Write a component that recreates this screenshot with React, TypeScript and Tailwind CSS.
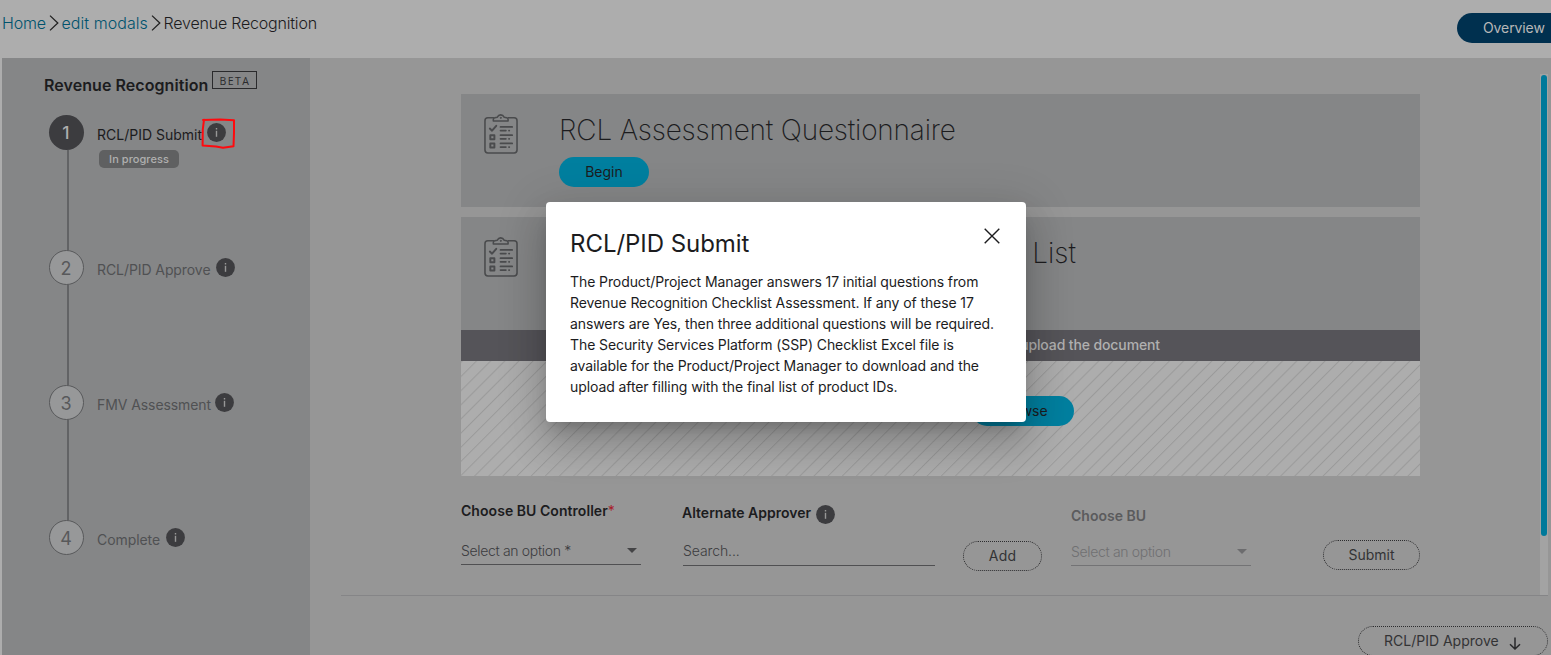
import React from "react";

function InfoIcon() {
  return (
    <svg className="block h-[19px] w-[19px] shrink-0" viewBox="0 0 19 19">
      <circle cx="9.5" cy="9.5" r="9.4" fill="#3c3c3f" />
      <rect x="8.8" y="7.8" width="1.4" height="6" fill="#979797" />
      <rect x="8.8" y="5" width="1.4" height="1.5" fill="#979797" />
    </svg>
  );
}

function ClipboardIcon() {
  return (
    <svg className="block h-10 w-[34px] shrink-0" viewBox="0 0 35 41" fill="none" stroke="#4a4b4d" strokeWidth="1.6" strokeLinecap="round" strokeLinejoin="round">
      <path d="M9.8 3.8H4A3 3 0 0 0 1 6.8V37a3 3 0 0 0 3 3h27a3 3 0 0 0 3-3V6.8a3 3 0 0 0-3-3h-6" />
      <path d="M9.6 7.2V5.6q0-1.6 1.6-1.9l2.3-.4c.8-1.5 2-2.5 3.7-2.5s2.9 1 3.7 2.5l2.3.4q1.6.3 1.6 1.9v1.6z" />
      <circle cx="17.2" cy="3.9" r=".5" strokeWidth="1" />
      <path d="M6 14.9l2.3 2.2 4.3-5" strokeWidth="2" />
      <rect x="6.5" y="21.7" width="4.2" height="4.2" strokeWidth="2" />
      <rect x="6.5" y="30.2" width="4.2" height="4.2" strokeWidth="2" />
      <path d="M17 13.2h12M17 21.7h12M17 30.2h12" strokeWidth="1.8" />
      <path d="M17 17h5.5M25.7 17h.3M17 25.5h5.5M25.7 25.5h.3M17 34h5.5M25.7 34h.3" strokeWidth="1.8" />
    </svg>
  );
}

function Chevron() {
  return (
    <svg className="mx-[3px] block h-4 w-[10px]" viewBox="0 0 10 16" fill="none" stroke="#222" strokeWidth="1.3">
      <path d="M1 .6l7.8 7.4L1 15.4" />
    </svg>
  );
}

function Caret({ color }: { color: string }) {
  return (
    <svg className="block h-[5px] w-[10px]" viewBox="0 0 10 5">
      <path d="M0 0h10L5 5z" fill={color} />
    </svg>
  );
}

function Step({ n, label, width, active, last }: { n: number; label: string; width: string; active?: boolean; last?: boolean }) {
  return (
    <div className="flex h-[135px]">
      <div className="flex w-[35px] flex-col items-center">
        <div
          className={
            active
              ? "flex h-[35px] w-[35px] shrink-0 items-center justify-center rounded-full bg-[#3c3c3f] pt-[2px] pr-[1px] text-[17.5px] font-medium text-[#adadad]"
              : "flex h-[35px] w-[35px] shrink-0 items-center justify-center rounded-full border border-[#58595b] bg-[#979899] pt-[2px] pr-[1px] text-[18px] text-[#58595b]"
          }
        >
          {n}
        </div>
        {!last && <div className="ml-[3px] w-[2px] grow bg-[#626365]" />}
      </div>
      <div className="ml-[13px] pt-2">
        <div className="flex h-[19px] items-center gap-[5px]">
          <div className={width + (active ? " text-[#1c1c1e]" : " tracking-[-0.08px] text-[#505153]") + " pt-[5px] text-[14px] leading-5 whitespace-nowrap"}>{label}</div>
          <InfoIcon />
        </div>
        {active && (
          <div className="mt-2 ml-[2px] flex h-[18px] w-20 items-center justify-center rounded-[5px] bg-[#5f6061] pt-[1px] text-[11px] font-medium tracking-[0.05px] text-[#b0b0b0]">In progress</div>
        )}
      </div>
    </div>
  );
}

function Card({ children }: { children: React.ReactNode }) {
  return (
    <div className="flex h-[113px] shrink-0 bg-[#858687] pt-5 pl-[23px]">
      <ClipboardIcon />
      {children}
    </div>
  );
}

export default function App() {
  return (
    <div className="relative flex h-[655px] w-[1551px] flex-col overflow-hidden bg-[#adadad] font-['Inter',sans-serif] text-[#1c1c1e]">
      <header className="flex h-[58px] shrink-0 justify-between">
        <nav className="mt-[13px] ml-[2px] flex h-5 items-center text-[16px] font-light whitespace-nowrap">
          <span className="w-[43.5px] tracking-[-0.2px] text-[#00536d]">Home</span>
          <Chevron />
          <span className="w-[86px] tracking-[0.05px] text-[#00536d]">edit modals</span>
          <Chevron />
          <span className="tracking-[-0.2px]">Revenue Recognition</span>
        </nav>
        <div className="mt-[13px] flex h-[30px] w-[94px] items-center rounded-l-full bg-[#00304f] pb-[2px] pl-[26px] text-[14px] tracking-[-0.1px] text-[#b8b8b8]">Overview</div>
      </header>
      <div className="flex grow">
        <aside className="ml-[2px] w-[308px] shrink-0 bg-[#858687]">
          <div className="flex h-[57px] pt-[13px] pl-[42px]">
            <h2 className="mt-1 h-5 w-[168px] text-[16px] leading-5 font-semibold tracking-[0.06px] whitespace-nowrap">Revenue Recognition</h2>
            <div className="flex h-[18px] w-[45px] items-center justify-center border border-[#2a2a2c] pt-[4px] pl-[1px] font-['Open_Sans',sans-serif] text-[10.5px] tracking-[1.5px] text-[#2a2a2c]">BETA</div>
          </div>
          <div className="pl-[47px]">
            <Step n={1} label="RCL/PID Submit" width="w-[105px]" active />
            <Step n={2} label="RCL/PID Approve" width="w-[114px]" />
            <Step n={3} label="FMV Assessment" width="w-[113px]" />
            <Step n={4} label="Complete" width="w-[63.5px]" last />
          </div>
        </aside>
        <main className="flex w-[1241px] flex-col bg-[#969696]">
          <div className="flex h-[537px] shrink-0 justify-between">
            <div className="ml-[151px] flex w-[959px] flex-col pt-9">
              <Card>
                <div className="ml-[41px]">
                  <h1 className="mt-[-4px] h-10 text-[28px] leading-10 font-extralight tracking-[-0.2px] whitespace-nowrap">RCL Assessment Questionnaire</h1>
                  <div className="mt-[7px] flex h-[30px] w-[90px] items-center justify-center rounded-full bg-[#007f9f] pb-[2px] text-[14px]">Begin</div>
                </div>
              </Card>
              <div className="h-[10px] shrink-0" />
              <Card>
                <h1 className="mt-[-4px] ml-[41px] h-10 w-[517px] text-right text-[28px] leading-10 font-extralight whitespace-nowrap">List</h1>
              </Card>
              <div className="flex h-[31px] shrink-0 items-center justify-end bg-[#555459] pr-[260px] pb-[2px] text-[14px] font-medium tracking-[-0.12px] text-[#b0b0b0]">upload the document</div>
              <div className="flex h-[115px] shrink-0 justify-end bg-[repeating-linear-gradient(135deg,#adadad_0px,#9a9a9a_0.9px,#a6a6a6_1.5px,#adadad_2.2px,#adadad_10px)] pt-[35px] pr-[346px]">
                <div className="flex h-[30px] w-[102px] items-center justify-center rounded-full bg-[#007f9f] pb-[2px] text-[14px]">Browse</div>
              </div>
              <div className="flex pt-[24px] text-[14px]">
                <div className="w-[180px]">
                  <div className="flex h-5 items-center font-semibold tracking-[0.05px] whitespace-nowrap">Choose BU Controller<span className="font-normal text-[#a81c2b]">*</span></div>
                  <div className="mt-5 flex h-[25px] items-center justify-between border-b border-[#505052] pr-1 pb-[3px] font-light text-[#3c3c3f]">
                    <span className="tracking-[-0.33px]">Select an option *</span>
                    <Caret color="#444446" />
                  </div>
                </div>
                <div className="ml-[41px] w-[253px] pt-[2px]">
                  <div className="flex h-5 items-center gap-[5px] font-semibold whitespace-nowrap">
                    <span className="w-[129px]">Alternate Approver</span>
                    <div className="pt-[4px]"><InfoIcon /></div>
                  </div>
                  <div className="mt-[18px] ml-[1px] flex h-[26px] items-center border-b border-[#505052] pb-[4px] font-light tracking-[-0.1px] text-[#3c3c3f]">Search...</div>
                </div>
                <div className="mt-[41px] ml-[28px] flex h-[30px] w-[79px] items-center justify-center rounded-full border border-dotted border-[#2c2c2e] pb-[2px] text-[14px] tracking-[0.2px] text-[#333335]">Add</div>
                <div className="ml-[29px] w-[180px] pt-[5px]">
                  <div className="flex h-5 items-center font-semibold text-[#5b5b5d]">Choose BU</div>
                  <div className="mt-4 flex h-[25px] items-center justify-between border-b border-[#737375] pr-1 pb-[3px] font-light text-[#707072]">
                    <span className="tracking-[-0.33px]">Select an option</span>
                    <Caret color="#6c6c6e" />
                  </div>
                </div>
                <div className="mt-[40px] ml-[72px] flex h-[30px] w-[97px] items-center justify-center rounded-full border border-dotted border-[#2c2c2e] pb-[2px] text-[14px] text-[#333335]">Submit</div>
              </div>
            </div>
            <div className="mt-[16px] mr-[3px] w-2 bg-[#a3a3a3] px-[1px] pt-[1px]">
              <div className="h-[461px] rounded-full bg-[#00799a]" />
            </div>
          </div>
          <div className="mr-[3px] ml-[31px] h-px bg-[#858587]" />
          <div className="mt-[30px] mr-[3px] flex h-[30px] w-[190px] shrink-0 items-center gap-[10px] self-end rounded-full border border-dotted border-[#2c2c2e] pl-[25px] text-[14px] whitespace-nowrap text-[#333335]">
            <span className="w-[115px] pb-[2px]">RCL/PID Approve</span>
            <svg className="mt-1 block h-[13px] w-3" viewBox="0 0 12 13" fill="none" stroke="#29292b" strokeWidth="1.5">
              <path d="M6 .5v11.5M1 7.2l5 4.8 5-4.8" />
            </svg>
          </div>
        </main>
      </div>
      <svg className="absolute top-[117px] left-[200px] h-[34px] w-[37px]" viewBox="0 0 37 34" fill="none" stroke="#ff0a0e" strokeWidth="2" strokeLinejoin="round" strokeLinecap="round">
        <path d="M4 2.7L2.8 12.5 2.6 28.5 16 29.5 23 30.7 33.5 29.3 34 16 34 3.2 20 2.5 3 2.9" />
      </svg>
      <section role="dialog" className="absolute top-[202px] left-[546px] h-[220px] w-[480px] rounded-[4px] bg-white px-6 pt-[22px] shadow-[0_11px_15px_-7px_rgba(0,0,0,0.2),0_24px_38px_3px_rgba(0,0,0,0.14),0_9px_46px_8px_rgba(0,0,0,0.12)]">
        <div className="flex h-10 justify-between">
          <h2 className="text-[24px] leading-10 font-normal tracking-[-0.05px]">RCL/PID Submit</h2>
          <svg className="mt-1 mr-[2px] block h-4 w-4" viewBox="0 0 16 16" fill="none" stroke="#1c1c1e" strokeWidth="1.4">
            <path d="M.7.7l14.6 14.6M15.3.7L.7 15.3" />
          </svg>
        </div>
        <p className="mt-[7px] text-[14px] leading-[21px] tracking-[-0.09px] whitespace-nowrap">
          The Product/Project Manager answers 17 initial questions from<br />
          Revenue Recognition Checklist Assessment. If any of these 17<br />
          answers are Yes, then three additional questions will be required.<br />
          The Security Services Platform (SSP) Checklist Excel file is<br />
          available for the Product/Project Manager to download and the<br />
          upload after filling with the final list of product IDs.
        </p>
      </section>
    </div>
  );
}
